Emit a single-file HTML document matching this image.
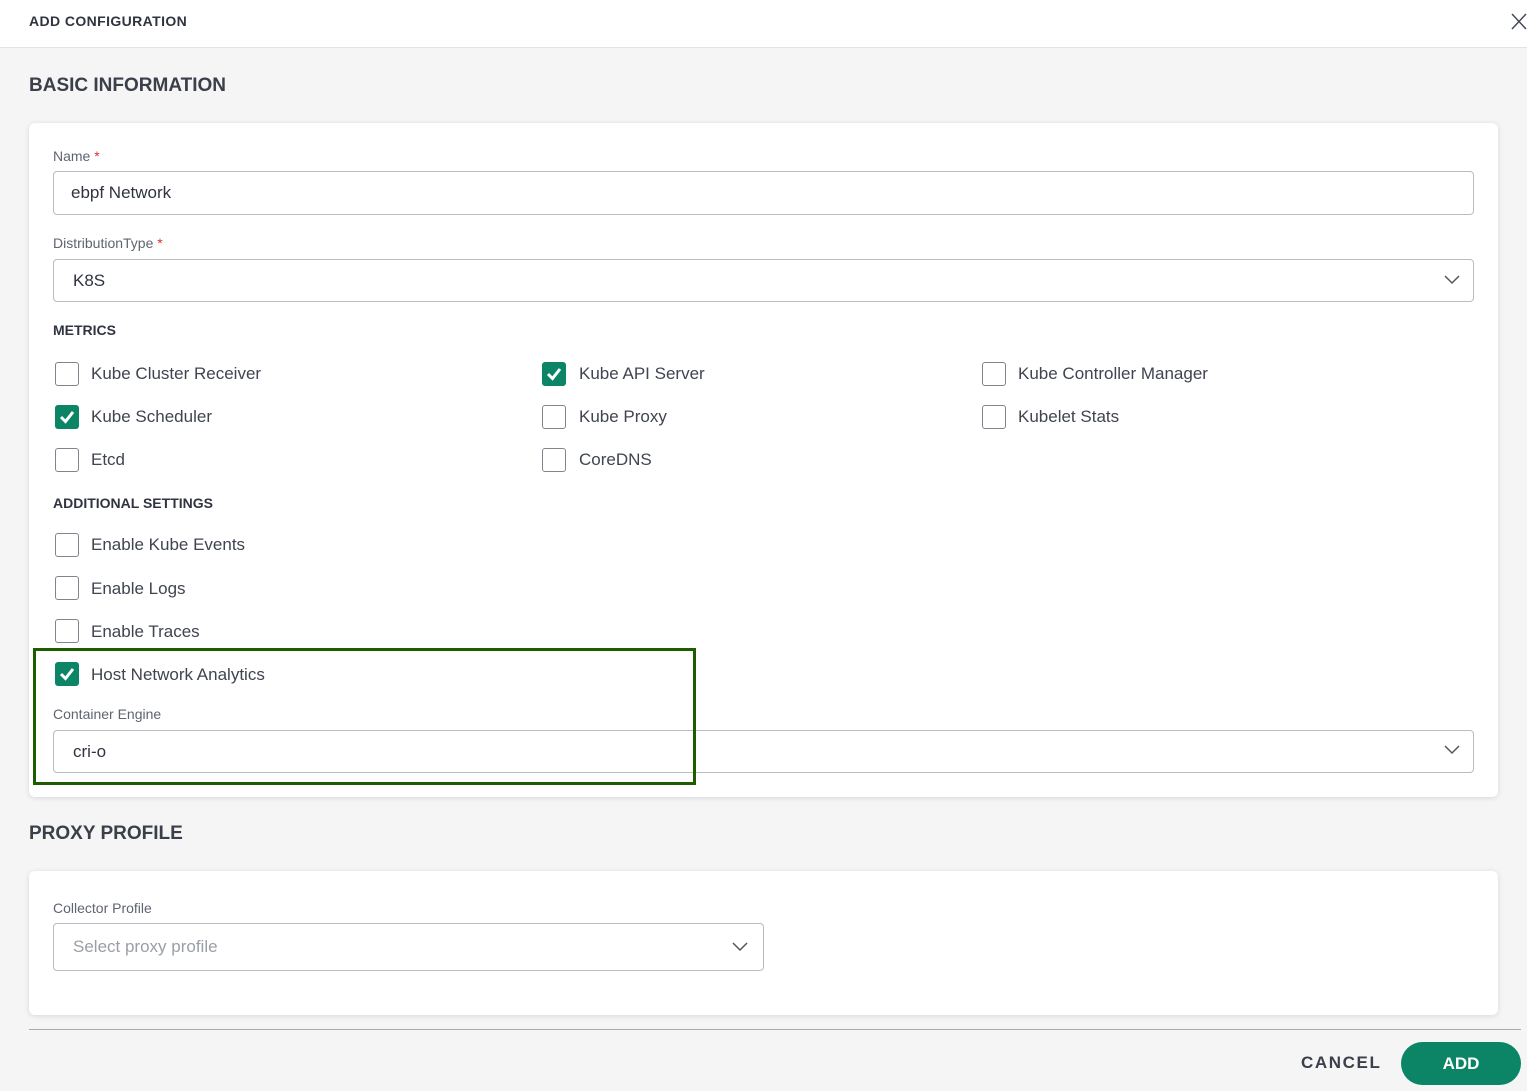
<!DOCTYPE html>
<html><head><style>
*{box-sizing:border-box;margin:0;padding:0}
body{width:1527px;height:1091px;background:#f5f5f5;font-family:"Liberation Sans",sans-serif;color:#3a3f4a;position:relative;overflow:hidden}
.a{position:absolute}
.hdr{left:0;top:0;width:1527px;height:48px;background:#fff;border-bottom:1px solid #e2e3e8}
.card{background:#fff;border-radius:6px;box-shadow:0 1px 6px rgba(0,0,0,.12)}
.lbl{font-size:14px;color:#5f6470}
.inp{border:1px solid #b8bcc4;border-radius:4px;background:#fff;font-size:17px;color:#2f3440;padding-left:19px;display:flex;align-items:center}
.cb{width:24px;height:24px;border:1.5px solid #80848c;border-radius:3px;background:#fff}
.cb.on{background:#0b8566;border-color:#0b8566}
.t{font-size:17px;color:#3f4450}
.sec{font-size:14px;font-weight:bold;color:#2f3440}
.chev{width:16px;height:10px}
</style></head><body>
<div class="a hdr"></div>
<div class="a" style="left:29px;top:13px;font-size:14px;font-weight:bold;color:#2f3440;letter-spacing:0.4px">ADD CONFIGURATION</div>
<svg class="a" style="left:1511px;top:13px" width="16" height="17"><path d="M1 1L15 16M15 1L1 16" stroke="#444a55" stroke-width="1.5"/></svg>
<div class="a" style="left:29px;top:75px;font-size:19px;font-weight:bold;color:#3a3f4a">BASIC INFORMATION</div>
<div class="a card" style="left:29px;top:123px;width:1469px;height:674px"></div>
<div class="a lbl" style="left:53px;top:148px">Name <span style="color:#e03030">*</span></div>
<div class="a inp" style="left:53px;top:171px;width:1421px;height:44px;padding-left:17px">ebpf Network</div>
<div class="a lbl" style="left:53px;top:235px">DistributionType <span style="color:#e03030">*</span></div>
<div class="a inp" style="left:53px;top:259px;width:1421px;height:43px">K8S</div>
<svg class="a chev" style="left:1444px;top:275px"><path d="M1 1L8 8L15 1" stroke="#555" stroke-width="1.5" fill="none"/></svg>
<div class="a sec" style="left:53px;top:322px">METRICS</div>

<div class="a cb" style="left:55px;top:362px"></div><div class="a t" style="left:91px;top:364px">Kube Cluster Receiver</div>
<div class="a cb on" style="left:542px;top:362px"><svg width="22" height="22"><path d="M5 11L9.5 15.5L17 6" stroke="#fff" stroke-width="3" fill="none"/></svg></div><div class="a t" style="left:579px;top:364px">Kube API Server</div>
<div class="a cb" style="left:982px;top:362px"></div><div class="a t" style="left:1018px;top:364px">Kube Controller Manager</div>

<div class="a cb on" style="left:55px;top:405px"><svg width="22" height="22"><path d="M5 11L9.5 15.5L17 6" stroke="#fff" stroke-width="3" fill="none"/></svg></div><div class="a t" style="left:91px;top:407px">Kube Scheduler</div>
<div class="a cb" style="left:542px;top:405px"></div><div class="a t" style="left:579px;top:407px">Kube Proxy</div>
<div class="a cb" style="left:982px;top:405px"></div><div class="a t" style="left:1018px;top:407px">Kubelet Stats</div>

<div class="a cb" style="left:55px;top:448px"></div><div class="a t" style="left:91px;top:450px">Etcd</div>
<div class="a cb" style="left:542px;top:448px"></div><div class="a t" style="left:579px;top:450px">CoreDNS</div>

<div class="a sec" style="left:53px;top:495px">ADDITIONAL SETTINGS</div>
<div class="a cb" style="left:55px;top:533px"></div><div class="a t" style="left:91px;top:535px">Enable Kube Events</div>
<div class="a cb" style="left:55px;top:576px"></div><div class="a t" style="left:91px;top:579px">Enable Logs</div>
<div class="a cb" style="left:55px;top:619px"></div><div class="a t" style="left:91px;top:622px">Enable Traces</div>
<div class="a cb on" style="left:55px;top:662px"><svg width="22" height="22"><path d="M5 11L9.5 15.5L17 6" stroke="#fff" stroke-width="3" fill="none"/></svg></div><div class="a t" style="left:91px;top:665px">Host Network Analytics</div>
<div class="a lbl" style="left:53px;top:706px">Container Engine</div>
<div class="a inp" style="left:53px;top:730px;width:1421px;height:43px">cri-o</div>
<svg class="a chev" style="left:1444px;top:745px"><path d="M1 1L8 8L15 1" stroke="#555" stroke-width="1.5" fill="none"/></svg>
<div class="a" style="left:33px;top:648px;width:663px;height:137px;border:3px solid #1e5c00"></div>

<div class="a" style="left:29px;top:823px;font-size:19px;font-weight:bold;color:#3a3f4a">PROXY PROFILE</div>
<div class="a card" style="left:29px;top:871px;width:1469px;height:144px"></div>
<div class="a lbl" style="left:53px;top:900px">Collector Profile</div>
<div class="a inp" style="left:53px;top:923px;width:711px;height:48px;color:#9a9ea6">Select proxy profile</div>
<svg class="a chev" style="left:732px;top:942px"><path d="M1 1L8 8L15 1" stroke="#555" stroke-width="1.5" fill="none"/></svg>

<div class="a" style="left:29px;top:1029px;width:1492px;height:1px;background:#a9a8b4"></div>
<div class="a" style="left:1301px;top:1053px;font-size:17px;font-weight:bold;letter-spacing:1.6px;color:#3a3f4a">CANCEL</div>
<div class="a" style="left:1401px;top:1042px;width:120px;height:43px;border-radius:22px;background:#0b8566;color:#fff;font-size:17px;font-weight:bold;display:flex;align-items:center;justify-content:center">ADD</div>
</body></html>
